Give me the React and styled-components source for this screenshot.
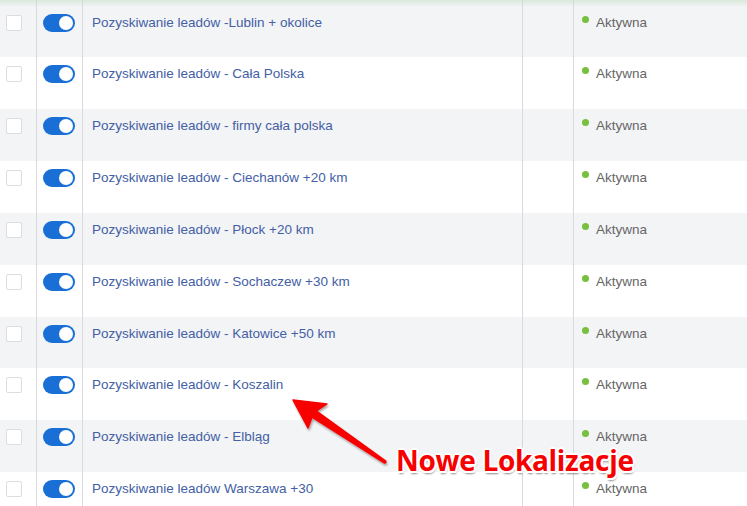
import React from 'react';
import styled, { createGlobalStyle } from 'styled-components';

const GlobalStyle = createGlobalStyle`
    html, body {
        margin: 0;
        padding: 0;
        background: #fff;
    }
    body {
        font-family: "Liberation Sans", Arial, sans-serif;
        overflow: hidden;
    }
`

const Page = styled.div`
    position: relative;
    width: 747px;
    height: 506px;
    overflow: hidden;
`

const Table = styled.div`
    position: relative;

    &::after {
        content: '';
        position: absolute;
        top: 0;
        left: 0;
        right: 0;
        height: 7px;
        background: linear-gradient(rgba(196, 222, 196, 0.55), rgba(196, 222, 196, 0));
        pointer-events: none;
    }
`

const Row = styled.div`
    display: grid;
    grid-template-columns: 36px 46px 440px 51px 1fr;
    height: ${props => props.first ? '57.4px' : '51.85px'};
    background: ${props => props.striped ? '#f3f4f6' : '#fff'};
`

const Cell = styled.div`
    display: flex;
    align-items: flex-start;
    padding-top: ${props => props.first ? '15px' : '9px'};
    box-sizing: border-box;
    border-left: ${props => props.divider ? '1px solid #d9d9db' : 'none'};
`

const Checkbox = styled.span`
    display: block;
    width: 14px;
    height: 14px;
    margin: 0 0 0 6px;
    border: 1px solid #dcdde0;
    border-radius: 2px;
    background: #fff;
`

const Toggle = styled.span`
    position: relative;
    display: block;
    width: 32px;
    height: 18px;
    margin: -1px 0 0 6px;
    border-radius: 9px;
    background: #1a6fd6;

    &::after {
        content: '';
        position: absolute;
        top: 2px;
        right: 2px;
        width: 14px;
        height: 14px;
        border-radius: 50%;
        background: #fff;
    }
`

const Name = styled.a`
    margin: 0 0 0 9px;
    font-size: 13.5px;
    line-height: 16px;
    color: #4360a4;
    text-decoration: none;
    white-space: nowrap;
`

const Status = styled.span`
    display: flex;
    align-items: flex-start;
    margin-left: 8px;
    font-size: 13.5px;
    line-height: 16px;
    color: #666;

    &::before {
        content: '';
        width: 7px;
        height: 7px;
        margin: 1px 7px 0 0;
        border-radius: 50%;
        background: #77bf3f;
    }
`

const Callout = styled.div`
    position: absolute;
    left: 396px;
    top: 440px;
    font-family: "Open Sans", "Noto Sans", sans-serif;
    font-weight: 700;
    font-size: 28px;
    letter-spacing: -0.3px;
    line-height: 40px;
    color: #f70000;
    white-space: nowrap;
    text-shadow:
        -1.5px -1.5px 0 #fff, 1.5px -1.5px 0 #fff, -1.5px 1.5px 0 #fff, 1.5px 1.5px 0 #fff,
        0 -2px 0 #fff, 0 2px 0 #fff, -2px 0 0 #fff, 2px 0 0 #fff,
        1px 3px 2px rgba(0, 0, 0, 0.45);
`

const ArrowSvg = styled.svg`
    position: absolute;
    left: 0;
    top: 0;
    pointer-events: none;
    overflow: visible;
`

const campaigns = [
    'Pozyskiwanie leadów -Lublin + okolice',
    'Pozyskiwanie leadów - Cała Polska',
    'Pozyskiwanie leadów - firmy cała polska',
    'Pozyskiwanie leadów - Ciechanów +20 km',
    'Pozyskiwanie leadów - Płock +20 km',
    'Pozyskiwanie leadów - Sochaczew +30 km',
    'Pozyskiwanie leadów - Katowice +50 km',
    'Pozyskiwanie leadów - Koszalin',
    'Pozyskiwanie leadów - Elbląg',
    'Pozyskiwanie leadów Warszawa +30',
]

// tapered skitch-style arrow pointing at the new rows
const Arrow = () => (
    <ArrowSvg width="747" height="506" viewBox="0 0 747 506">
        <defs>
            <filter id="arrowShadow" x="-20%" y="-20%" width="140%" height="140%">
                <feDropShadow dx="1" dy="2" stdDeviation="1.2" floodColor="#000" floodOpacity="0.35" />
            </filter>
        </defs>
        <path
            d="M293 400 L327 404 L316.5 411 L385.8 461.2 Q386 463.5 384.2 462.8 L312 417.2 L308 428 Z"
            fill="#f70000"
            stroke="#f70000"
            strokeWidth="1.5"
            strokeLinejoin="round"
            filter="url(#arrowShadow)"
        />
    </ArrowSvg>
)

const App = () => (
    <Page>
        <GlobalStyle />
        <Table>
            {campaigns.map((name, i) => (
                <Row key={name} first={i === 0} striped={i % 2 === 0}>
                    <Cell first={i === 0}><Checkbox /></Cell>
                    <Cell first={i === 0} divider><Toggle /></Cell>
                    <Cell first={i === 0} divider><Name href="#">{name}</Name></Cell>
                    <Cell first={i === 0} divider />
                    <Cell first={i === 0} divider><Status>Aktywna</Status></Cell>
                </Row>
            ))}
        </Table>
        <Arrow />
        <Callout>Nowe Lokalizacje</Callout>
    </Page>
)

export default App;
